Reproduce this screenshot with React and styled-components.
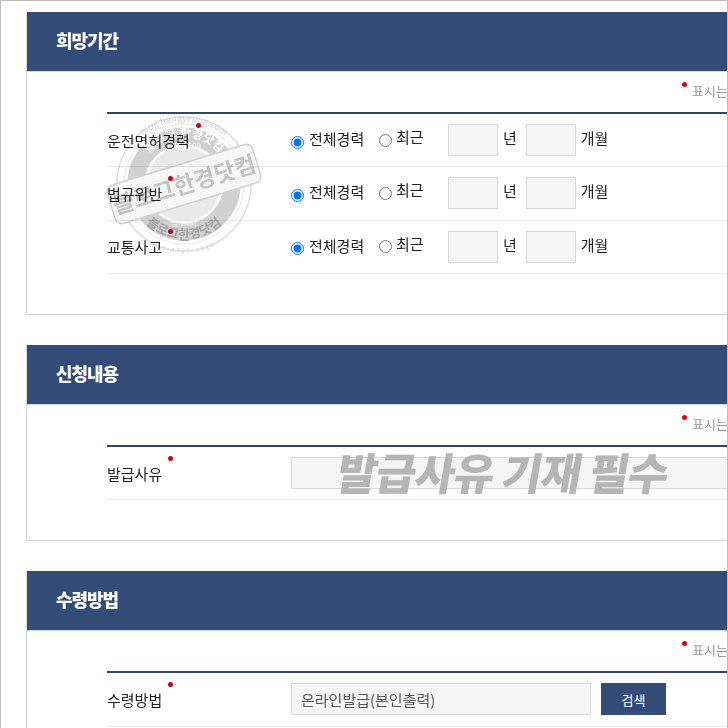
import styled, {createGlobalStyle} from 'styled-components'

const GlobalStyle = createGlobalStyle`
  html, body {
    margin: 0;
    padding: 0;
    background: #fff;
  }
  * {
    box-sizing: border-box;
  }
  body {
    font-family: "Noto Sans CJK KR", "Noto Sans", sans-serif;
    color: #222;
  }
`

const RowField = ({label}) => (
  <Row>
    <Label>
      <LabelText>
        {label}
        <Dot />
      </LabelText>
    </Label>
    <RadioLabel>
      <Radio type="radio" name={label} defaultChecked />
      전체경력
    </RadioLabel>
    <RadioLabel $second>
      <Radio type="radio" name={label} $second />
      최근
    </RadioLabel>
    <SmallInput $first />
    <Unit>년</Unit>
    <SmallInput />
    <Unit>개월</Unit>
  </Row>
)

const Note = () => (
  <NoteRow>
    <NoteDot />
    표시는 필수입력항목입니다
  </NoteRow>
)

const Stamp = () => (
  <StampSvg viewBox="0 0 160 150">
    <defs>
      <path id="stampTop" d="M17 75a63 63 0 0 1 126 0" />
      <path id="stampRing" d="M33 75a47 47 0 0 1 94 0" />
      <path id="stampBottom" d="M25 75a55 55 0 0 0 110 0" />
      <path id="stampEdge" d="M11 75a69 69 0 0 0 138 0" />
    </defs>
    <circle cx="80" cy="75" r="67" fill="#fff" fillOpacity="0.3" stroke="#d6d6d6" strokeWidth="1.5" />
    <circle cx="80" cy="75" r="48" fill="none" stroke="#c6c6c6" strokeWidth="17" />
    <circle cx="80" cy="75" r="37" fill="#e4e4e4" />
    <circle cx="80" cy="75" r="60" fill="none" stroke="#e3e3e3" strokeWidth="1" />
    <text fontSize="9" fill="#c4c4c4">
      <textPath href="#stampTop" startOffset="50%" textAnchor="middle">blog.hangyeong.com</textPath>
    </text>
    <text fontSize="12" fontWeight="700" fill="#fff">
      <textPath href="#stampRing" startOffset="50%" textAnchor="middle">블로그 한경닷컴</textPath>
    </text>
    <text fontSize="13" fontWeight="700" fill="#8a8a8a">
      <textPath href="#stampBottom" startOffset="50%" textAnchor="middle">블로그한경닷컴</textPath>
    </text>
    <text fontSize="6" fill="#c4c4c4" letterSpacing="2">
      <textPath href="#stampEdge" startOffset="50%" textAnchor="middle">010-4717-1515</textPath>
    </text>
    <text x="80" y="40" fontSize="8" fill="#fff" textAnchor="middle">EST 2009</text>
    <text x="80" y="117" fontSize="8" fill="#f2f2f2" textAnchor="middle">당 24시</text>
    <g transform="rotate(-17 80 75)">
      <rect x="4" y="55" width="152" height="40" rx="7" fill="#f4f4f4" stroke="#c6c6c6" strokeWidth="1.5" />
      <text x="80" y="84" fontSize="23" fontWeight="700" fill="#b4b4b4" textAnchor="middle">블로그한경닷컴</text>
    </g>
  </StampSvg>
)

const App = () => (
  <>
    <GlobalStyle />
    <Page>
      <Panel>
        <PanelHead>희망기간</PanelHead>
        <PanelBody>
          <Note />
          <Table>
            <RowField label="운전면허경력" />
            <RowField label="법규위반" />
            <RowField label="교통사고" />
          </Table>
          <Stamp />
        </PanelBody>
      </Panel>
      <Panel>
        <PanelHead>신청내용</PanelHead>
        <PanelBody>
          <Note />
          <Table>
            <Row>
              <Label>
                <LabelText>
                  발급사유
                  <Dot />
                </LabelText>
              </Label>
              <WideInput />
              <Overlay>발급사유 기재 필수</Overlay>
            </Row>
          </Table>
        </PanelBody>
      </Panel>
      <Panel>
        <PanelHead>수령방법</PanelHead>
        <PanelBody>
          <Note />
          <Table>
            <Row>
              <Label>
                <LabelText>
                  수령방법
                  <Dot />
                </LabelText>
              </Label>
              <ValueInput readOnly value="온라인발급(본인출력)" />
              <SearchButton>검색</SearchButton>
            </Row>
          </Table>
        </PanelBody>
      </Panel>
    </Page>
  </>
)

export default App

const Page = styled.div`
  width: 728px;
  height: 728px;
  overflow: hidden;
  border-top: 1px solid #bdbdbd;
  border-left: 1px solid #bdbdbd;
  border-right: 1px solid #bdbdbd;
  padding: 11px 0 0 25px;
  display: flex;
  flex-direction: column;
  gap: 30px;
`

const Panel = styled.section`
  flex: none;
  width: 860px;
  border-left: 1px solid #d4d4d4;
  border-bottom: 1px solid #d4d4d4;
`

const PanelHead = styled.h2`
  margin: 0;
  height: 60px;
  padding-left: 29px;
  background: #344c78;
  border-bottom: 1px solid #cfd8e4;
  color: #fff;
  font-size: 18px;
  font-weight: 900;
  letter-spacing: -1.1px;
  line-height: 57px;
`

const PanelBody = styled.div`
  position: relative;
  padding: 0 0 40px 80px;
`

const NoteRow = styled.div`
  position: relative;
  height: 40px;
  padding: 10px 0 0 585px;
  color: #999;
  font-size: 13px;
  line-height: 18px;
  white-space: nowrap;
`

const NoteDot = styled.i`
  position: absolute;
  left: 575px;
  top: 10px;
  width: 5px;
  height: 5px;
  border-radius: 50%;
  background: #e60012;
`

const Table = styled.div`
  border-top: 2px solid #2f4668;
`

const Row = styled.div`
  position: relative;
  display: flex;
  align-items: center;
  height: 53.33px;
  border-bottom: 1px solid #ececec;
`

const Label = styled.div`
  flex: none;
  width: 184px;
  font-size: 15px;
  color: #222;
  line-height: 20px;
  margin-top: 1px;
`

const LabelText = styled.span`
  position: relative;
`

const Dot = styled.i`
  position: absolute;
  right: -11px;
  top: -7px;
  width: 5px;
  height: 5px;
  border-radius: 50%;
  background: #d0021b;
`

const RadioLabel = styled.label`
  display: flex;
  align-items: center;
  flex: none;
  width: ${p => (p.$second ? '69px' : '88px')};
  margin-top: ${p => (p.$second ? '-6px' : '-2px')};
  font-size: 15px;
  line-height: 20px;
  color: #222;
`

const Radio = styled.input`
  width: 13px;
  height: 13px;
  margin: 6px ${p => (p.$second ? '4px' : '5px')} 0 0;
`

const SmallInput = styled.input`
  flex: none;
  width: 50px;
  height: 32px;
  margin-left: ${p => (p.$first ? '0' : '9px')};
  background: #f5f5f5;
  border: 1px solid #d9d9d9;
`

const Unit = styled.span`
  margin: -5px 0 0 5px;
  font-size: 15px;
  color: #222;
`

const WideInput = styled.input`
  flex: none;
  width: 560px;
  height: 32px;
  background: #f5f5f5;
  border: 1px solid #d9d9d9;
`

const ValueInput = styled.input`
  flex: none;
  width: 300px;
  height: 32px;
  padding: 0 9px;
  background: #f5f5f5;
  border: 1px solid #d9d9d9;
  color: #555;
  font-family: inherit;
  font-size: 15px;
  outline: none;
`

const SearchButton = styled.button`
  flex: none;
  width: 65px;
  height: 32px;
  margin-left: 10px;
  border: 0;
  background: #344c78;
  color: #fff;
  font-family: inherit;
  font-size: 13px;
`

const Overlay = styled.div`
  position: absolute;
  left: 231px;
  top: 0;
  color: #b5b5b5;
  font-size: 43.5px;
  font-weight: 900;
  line-height: 50px;
  white-space: nowrap;
  letter-spacing: -1px;
  transform: skewX(-10deg);
`

const StampSvg = styled.svg`
  position: absolute;
  left: 77px;
  top: 37px;
  width: 160px;
  height: 150px;
  opacity: 0.8;
  mix-blend-mode: multiply;
`
